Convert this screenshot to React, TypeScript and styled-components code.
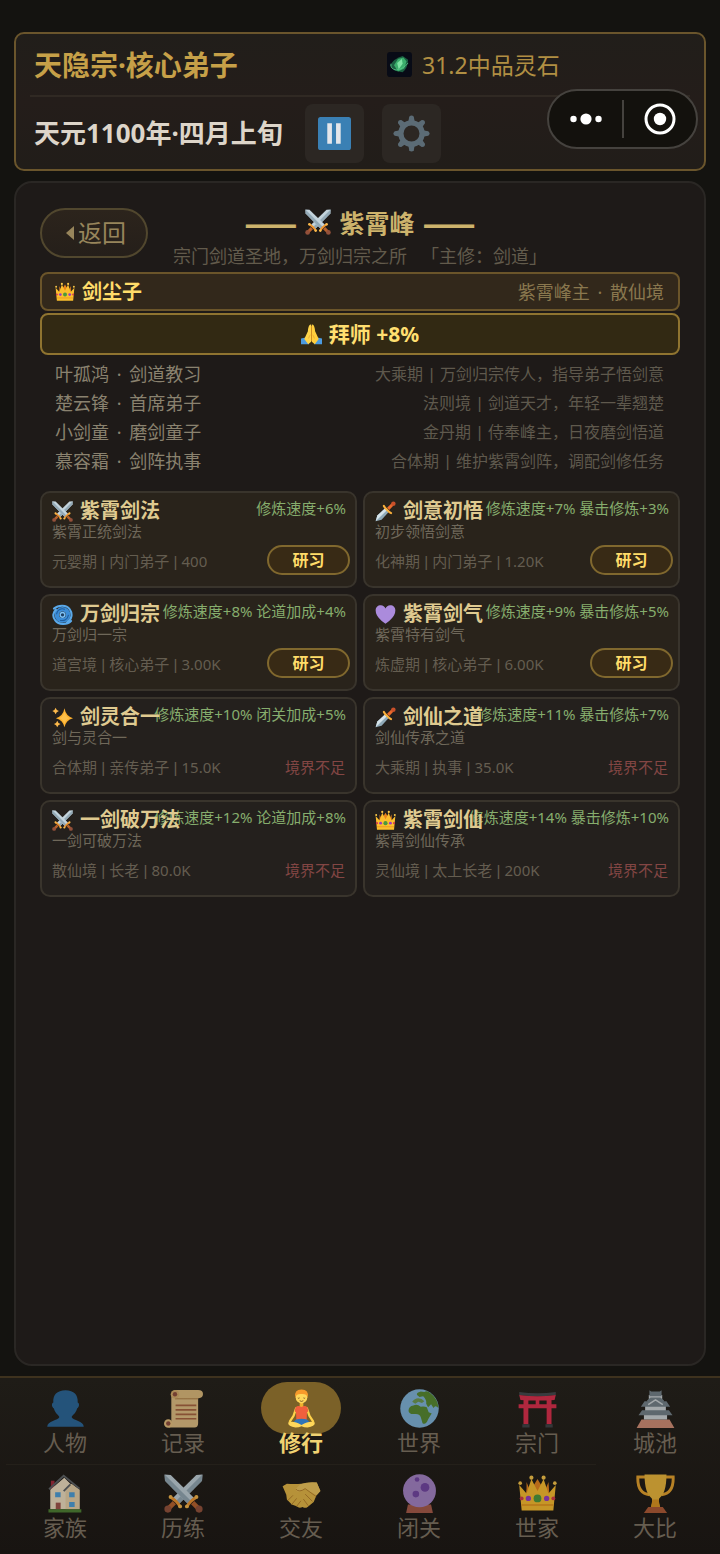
import React from "react";
import styled, { createGlobalStyle, css } from "styled-components";

const GlobalStyle = createGlobalStyle`
  * { box-sizing: border-box; }
  body {
    margin: 0;
    background: #141310;
    color: #8a826f;
    font-family: "Noto Sans", "Noto Sans CJK SC", sans-serif;
  }
  button { font-family: inherit; margin: 0; padding: 0; cursor: pointer; }
`;

/* ---------- icons ---------- */

type IconName =
  | "swords" | "dagger" | "cyclone" | "heart" | "sparkles" | "crown" | "pray"
  | "person" | "scroll" | "lotus" | "globe" | "torii" | "castle" | "house"
  | "handshake" | "crystal" | "trophy" | "pause" | "gear" | "gem";

const Sword = () => (
  <g>
    <path d="M.5 .5 L5.500 .8 L24.500 19.500 L19.500 24.500 L.8 5.500 Z" fill="#c3d3dc" />
    <path d="M.5 .5 L22 22 L19.500 24.500 L.8 5.500 Z" fill="#93a9b6" />
    <path d="M19 26.500 Q20.500 24 22 22.500 Q24 20.500 26.500 19" fill="none" stroke="#f0962f" strokeWidth="2.400" strokeLinecap="round" />
    <path d="M23.500 23.500 L28 28" stroke="#b8622c" strokeWidth="3.800" />
    <circle cx="28.800" cy="28.800" r="2.900" fill="#93503a" />
    <circle cx="18.800" cy="26.600" r="1.600" fill="#f9b94b" />
    <circle cx="26.600" cy="18.800" r="1.600" fill="#f9b94b" />
  </g>
);

const gearTeeth = [0, 45, 90, 135, 180, 225, 270, 315];

const drawings: Record<IconName, React.ReactNode> = {
  swords: (
    <>
      <g transform="matrix(-1 0 0 1 32 0)"><Sword /></g>
      <Sword />
    </>
  ),
  dagger: (
    <>
      <path d="M1 31 L3.500 22 L16 10.500 L21.500 16 L10 28.500 Z" fill="#8fa9b8" />
      <path d="M1 31 L3.500 22 L16 10.500 L19 13.500 Z" fill="#d5e3ea" />
      <path d="M20 12 L27 5" stroke="#e8692c" strokeWidth="4.600" />
      <path d="M13.500 7.500 Q15 10.500 18.500 13.500 Q21.500 17 24.500 18.500" fill="none" stroke="#fbb03b" strokeWidth="3.200" strokeLinecap="round" />
      <circle cx="28" cy="4" r="3.400" fill="#c9502a" />
    </>
  ),
  cyclone: (
    <g fill="none" strokeLinecap="round">
      <circle cx="16" cy="16.500" r="8.500" stroke="#3b8cd6" strokeWidth="7" />
      <path d="M3 7 C10 1 22 1 27 8 C32 15 30 24 23 28" stroke="#5aa9ea" strokeWidth="3.200" />
      <path d="M29 26 C23 32 10 32 5 25 C0 19 2 12 6 9" stroke="#5aa9ea" strokeWidth="3.200" />
      <path d="M7 15 C8 9 14 6 19 8 M25 17 C24 24 18 26 13 25" stroke="#1e5c9c" strokeWidth="1.600" />
      <circle cx="16" cy="16.500" r="3.600" fill="#1d3f63" stroke="#7cc0f5" strokeWidth="2.200" />
    </g>
  ),
  heart: (
    <path d="M16 30 C13 28 1 20 1 10 C1 5 4 2 9 2 C12 2 15 4 16 7 C17 4 20 2 23 2 C28 2 31 5 31 10 C31 20 19 28 16 30 Z" fill="#ab8bdc" />
  ),
  sparkles: (
    <>
      <path d="M19 2 Q21 14 32 17 Q21 20 19 31 Q17 20 6 17 Q17 14 19 2 Z" fill="#fdb02e" />
      <path d="M19 7 Q20.500 15 27 17 Q20.500 19 19 26 Q17.500 19 11 17 Q17.500 15 19 7 Z" fill="#fec04a" />
      <path d="M5.500 1 Q6.500 5 10.500 6 Q6.500 7 5.500 11 Q4.500 7 .5 6 Q4.500 5 5.500 1 Z" fill="#fdb94b" />
      <path d="M8 21 Q9 25 13 26 Q9 27 8 31 Q7 27 3 26 Q7 25 8 21 Z" fill="#fdb94b" />
    </>
  ),
  crown: (
    <>
      <path d="M7 12 L7 6.500 L10 14 L16 4 L22 14 L25 6.500 L26 20 L6 20 Z" fill="#e8841c" />
      <path d="M3 30 L1 9 L7 16 L11 4 L16 14 L21 4 L25 16 L31 9 L29 30 Z" fill="#fcbf2e" />
      <g fill="#fcc94a">
        <circle cx="1.800" cy="7.500" r="1.500" />
        <circle cx="11" cy="3" r="1.700" />
        <circle cx="21" cy="3" r="1.700" />
        <circle cx="30.200" cy="7.500" r="1.500" />
      </g>
      <path d="M3 25.500 H29" stroke="#e8941c" strokeWidth="1.200" />
      <circle cx="16" cy="20" r="3.200" fill="#4b9a3c" />
      <circle cx="8.500" cy="20" r="2.200" fill="#9a3bc4" />
      <circle cx="23.500" cy="20" r="2.200" fill="#9a3bc4" />
      <circle cx="3" cy="20" r="1.600" fill="#d63a48" />
      <circle cx="29" cy="20" r="1.600" fill="#d63a48" />
    </>
  ),
  pray: (
    <>
      <path d="M0 22 L9 20 L12 31 L0 31 Z M32 22 L23 20 L20 31 L32 31 Z" fill="#4c9be0" />
      <path d="M15.500 1 C12.500 0 11 5 10.500 11 L5 23 L11 31 L15.500 27 Z" fill="#ffd54a" />
      <path d="M16.500 1 C19.500 0 21 5 21.500 11 L27 23 L21 31 L16.500 27 Z" fill="#ffcf3d" />
      <path d="M16 3 V26" stroke="#e59a24" strokeWidth="1.200" />
      <path d="M11.500 22 Q13 17 15 16 M20.500 22 Q19 17 17 16" stroke="#e8a32b" strokeWidth="1" fill="none" />
    </>
  ),
  person: (
    <path d="M16 1 C23 1 26.500 5 26 11 C28 12 27 15 25.500 16 C24.500 20 22 21 21 23 C22 26 31 26 31 31 H1 C1 26 10 26 11 23 C10 21 7.500 20 6.500 16 C5 15 4 12 6 11 C5.500 5 9 1 16 1 Z" fill="#27659a" />
  ),
  scroll: (
    <>
      <path d="M6 4 H28 V28 Q28 31.500 25 31.500 H4 V27 H6 Z" fill="#e2c084" />
      <path d="M8.500 .8 H28 Q32 .8 32 4.200 Q32 7.500 28.500 7.500 H8.500 Z" fill="#dfbc7c" />
      <path d="M9 8 H28" stroke="#b88a4f" strokeWidth="1" />
      <circle cx="9" cy="4.300" r="3.500" fill="#d9ae6c" />
      <circle cx="9" cy="4.300" r="1.800" fill="#8f4c3c" />
      <circle cx="3.500" cy="28.300" r="3.500" fill="#e8c27e" />
      <circle cx="3.500" cy="28.300" r="1.800" fill="#8f4c3c" />
      <path d="M9.500 13.500 H26.500 M9.500 17.200 H26.500 M9.500 20.800 H26.500 M9.500 24.400 H26.500" stroke="#a8623f" strokeWidth="1.400" />
    </>
  ),
  lotus: (
    <>
      <path d="M11.500 16 L9.500 22 L6.500 26.500 M20.500 16 L22.500 22 L25.500 26.500" fill="none" stroke="#ffd24a" strokeWidth="1.900" strokeLinecap="round" />
      <path d="M10.500 18.500 Q10.500 14.500 13 14 H19 Q21.500 14.500 21.500 18.500 L20.500 19 L20.200 26 H11.800 L11.500 19 Z" fill="#f0603d" />
      <path d="M11.500 25 Q16 24 20.500 25 L23.500 28 Q16 31 8.500 28 Z" fill="#2f74b8" />
      <path d="M5 27.500 Q9 25.500 16 29.500 Q23 25.500 27 27.500 Q27 31 21 31.500 Q18 31.500 16 30.500 Q14 31.500 11 31.500 Q5 31 5 27.500 Z" fill="#ffd75a" />
      <path d="M14.500 10 H17.500 V14 Q16 15.500 14.500 14 Z" fill="#eeb12f" />
      <ellipse cx="16" cy="6.800" rx="4.800" ry="5" fill="#ffd75a" />
      <path d="M10.800 7 Q9.800 .5 16 .5 Q22.200 .5 21.200 7 Q20 3.800 16 4.200 Q12 3.800 10.800 7 Z" fill="#f79a2b" />
      <path d="M13 7.300 Q13.700 8 14.400 7.300 M17.600 7.300 Q18.300 8 19 7.300 M14.500 9.600 Q16 10.800 17.500 9.600" stroke="#5c3b1c" strokeWidth=".6" fill="none" />
    </>
  ),
  globe: (
    <>
      <circle cx="16" cy="16" r="15.800" fill="#7fb5dd" />
      <path d="M7 18 Q7 14 11 13.500 Q14 12 17 14.500 Q20 14 22 15 L23.500 19 L26 20 Q24 23 23 25 Q21 30 18.500 28 L17 23 Q16 20 12 20.500 Q7.500 21 7 18 Z" fill="#54892f" />
      <path d="M14 5 Q13 3 17 2 L20 2.500 Q22 .8 25 3.500 Q31 8 31.500 15.500 Q29 13 27.500 15.500 L25.500 12.500 L23 15 L21.500 12 Q22 9 19 6 L16 6.500 Z" fill="#54892f" />
      <path d="M10 10.500 Q12 7.500 15 7.500 Q18 7.500 20 10 L18 11.500 L15 10.500 L12.500 12 Z" fill="#6c9a52" />
    </>
  ),
  torii: (
    <>
      <path d="M1 2.500 Q16 4.500 31 2.500 V5 Q16 7 1 5 Z" fill="#41464b" />
      <path d="M1 5 Q16 7 31 5 L30 9 Q16 10 2 9 Z M.5 12.500 H31.500 V15.800 H.5 Z M4.500 9 H8.500 V29 H4.500 Z M23.500 9 H27.500 V29 H23.500 Z M14.500 9 H17.500 V13 H14.500 Z" fill="#de2c4b" />
      <path d="M3.500 29 H9.500 V31.500 H3.500 Z M22.500 29 H28.500 V31.500 H22.500 Z" fill="#3c4146" />
    </>
  ),
  castle: (
    <>
      <path d="M4.500 25 H27.500 L31.500 32 H.5 Z" fill="#d38e76" />
      <path d="M6.500 20 H25.500 V25 H6.500 Z M7.500 14 H24.500 V18 H7.500 Z M10.500 5 H21.500 V11 H10.500 Z" fill="#cfd6da" />
      <path d="M11 1 L12.500 2 H19.500 L21 1 V6 H11 Z M9 9.500 L12 7 H20 L23 9.500 L22 11 H10 Z M4 14.500 L7 10 H25 L28 14.500 H4 Z M2 21.500 L5 17.500 H27 L30 21.500 Z" fill="#73818a" />
      <path d="M10 12.800 L16 9 L22 12.800" fill="none" stroke="#cfd6da" strokeWidth="1.200" />
    </>
  ),
  house: (
    <>
      <path d="M4 5.500 H7 V13 H4 Z" fill="#a3293b" />
      <path d="M3.500 13 L15 3 L20 8 L27.500 13 V29 H3.500 Z" fill="#f2e2c4" />
      <path d="M16 12 L21 8 L27.500 13 V29 H16 Z" fill="#ead3aa" />
      <path d="M2.500 12.500 L14.500 1.500 L27.500 12 M14.500 14 L20 8.500" fill="none" stroke="#5d6266" strokeWidth="1.500" />
      <path d="M7.500 15 H12 V19 H7.500 Z M19 15 H23.500 V19 H19 Z M19 23 H23.500 V27 H19 Z" fill="#4ba0dd" />
      <path d="M8 23.500 H12 V29 H8 Z" fill="#a0534a" />
      <path d="M2 29 H29 V31.500 H2 Z" fill="#4c8132" />
    </>
  ),
  handshake: (
    <>
      <path d="M.5 10 L4 8 Q10 8.500 16 8 Q22 7 28.500 7 L31.500 14 L28.500 17 L26 23 L21 27 Q19 28.500 17 27 Q14 28.500 12 26.500 L8 25 L4 21 L3.500 17 Z" fill="#e8b945" />
      <path d="M15 8.500 Q22 6 28.500 7 L31.500 14 L28.500 17.500 L19 12 L14 14.500 Q11 14 11.500 12 Z" fill="#f2c85c" />
      <path d="M5 21.500 L9 17.500 M8 25 L12 20 M12 26.500 L15.500 22 M11.500 12.500 Q14 15.500 19 12 L28 18.500 M19 16.500 L25 22.500 M17.500 20.500 L21.500 26" stroke="#b9832a" strokeWidth=".8" fill="none" />
    </>
  ),
  crystal: (
    <>
      <path d="M6.500 25 H25.500 L27 32 H5 Z" fill="#a85a48" />
      <circle cx="16" cy="13.800" r="13.500" fill="#a583c9" />
      <circle cx="20.500" cy="11" r="3.600" fill="#7244a6" />
      <circle cx="13" cy="16.500" r="2.700" fill="#7244a6" />
      <circle cx="14" cy="4.500" r="1.900" fill="#7244a6" />
    </>
  ),
  trophy: (
    <>
      <path d="M8 2.500 H1.500 Q1 16 11 17 M24 2.500 H30.500 Q31 16 21 17" fill="none" stroke="#e8a32b" strokeWidth="2.400" />
      <path d="M7 .5 H25 Q25 16 19 20 L18.500 23 L20 28 H12 L13.500 23 L13 20 Q7 16 7 .5 Z" fill="#efb93a" />
      <path d="M13.500 21 H18.500 L20 28 H12 Z" fill="#e0961f" />
      <path d="M10 27 H22 L25.500 32 H6.500 Z" fill="#b05a35" />
    </>
  ),
  pause: (
    <>
      <rect x="0" y="0" width="32" height="32" rx="2.500" fill="#3a80b4" />
      <path d="M9 6 H13.500 V26 H9 Z M17.500 6 H22 V26 H17.500 Z" fill="#e4e6ea" />
    </>
  ),
  gear: (
    <g>
      {gearTeeth.map((a) => (
        <path key={a} d="M13 7.500 L14 1.500 Q16 -.8 18 1.500 L19 7.500 Z" fill="#5b6b75" transform={`rotate(${a} 16 16)`} />
      ))}
      <circle cx="16" cy="16" r="9.200" fill="none" stroke="#5b6b75" strokeWidth="4.600" />
    </g>
  ),
  gem: (
    <>
      <rect width="32" height="32" rx="4" fill="#080b16" />
      <path d="M4 17 Q9 8 20 5 L27 10 Q27 20 20 26 L10 24 Z" fill="#1c5f42" />
      <path d="M9 17 L14 9 L21 7 L25 12 L22 21 L14 25 Z" fill="#3bae6c" />
      <path d="M13 14 L19 9 L20 15 L15 22 Z" fill="#7fe3a4" />
      <path d="M5 15 Q4 22 12 23 Q21 22 27 14" stroke="#59c98a" strokeWidth="1" fill="none" />
    </>
  ),
};

const IconSvg = styled.svg<{ $size: number }>`
  display: block;
  flex: none;
  width: ${(p) => p.$size}px;
  height: ${(p) => p.$size}px;
`;

const Icon = ({ name, size }: { name: IconName; size: number }) => (
  <IconSvg $size={size} viewBox="0 0 32 32" aria-hidden="true">
    {drawings[name]}
  </IconSvg>
);

/* ---------- page and status header ---------- */

const Page = styled.div`
  position: relative;
  display: flex;
  flex-direction: column;
  min-height: 100vh;
  padding-top: 32px;
`;

const StatusCard = styled.header`
  margin: 0 14px;
  padding: 0 14px;
  border: 2px solid #6a552c;
  border-radius: 10px;
  background: linear-gradient(#211e1a, #241d1a 50%, #211d19);
`;

const StatusRow = styled.div`
  display: grid;
  grid-template-columns: 1fr 1fr;
  align-items: center;
  height: 61px;
  padding: 0 4px;
`;

const TimeRow = styled.div`
  display: flex;
  align-items: center;
  gap: 18px;
  height: 74px;
  padding: 0 4px;
  border-top: 2px solid #302923;
`;

const RankName = styled.h1`
  margin: 0;
  color: #c6a048;
  font-size: 28px;
  line-height: 36px;
`;

const Currency = styled.div`
  display: flex;
  align-items: center;
  gap: 10px;
  padding-left: 27px;
  color: #b18f43;
  font-size: 23px;
  line-height: 32px;
  white-space: nowrap;
`;

const GameDate = styled.div`
  min-width: 253px;
  color: #ddd5c9;
  font-size: 26px;
  font-weight: 700;
  line-height: 36px;
  white-space: nowrap;
`;

const SquareButton = styled.button`
  display: flex;
  align-items: center;
  justify-content: center;
  width: 59px;
  height: 59px;
  border: 0;
  border-radius: 8px;
  background: #2c2723;
`;

const Capsule = styled.div`
  position: absolute;
  top: 89px;
  right: 22px;
  display: grid;
  grid-template-columns: 73px 1fr;
  align-items: center;
  width: 151px;
  height: 60px;
  border: 2px solid #45423e;
  border-radius: 30px;
  background: #13110d;
`;

const CapsuleButton = styled.button`
  display: flex;
  align-items: center;
  justify-content: center;
  height: 38px;
  border: 0;
  background: none;
  & + & { border-left: 2px solid #45423e; }
`;

/* ---------- main panel ---------- */

const Panel = styled.main`
  flex: 1;
  margin: 10px 14px;
  padding: 25px 24px;
  border: 2px solid #2a2724;
  border-radius: 18px;
  background: #1e1a18;
`;

const PanelHeader = styled.div`
  display: grid;
  grid-template-columns: 108px 1fr 108px;
  align-items: start;
`;

const BackButton = styled.button`
  display: flex;
  align-items: center;
  justify-content: center;
  gap: 4px;
  height: 50px;
  padding-left: 4px;
  border: 2px solid #51472e;
  border-radius: 25px;
  background: linear-gradient(#2c241c, #251f1a);
  color: #97855b;
  font-size: 24px;
  line-height: 30px;
`;

const PeakTitle = styled.h2`
  display: flex;
  align-items: center;
  justify-content: center;
  gap: 8px;
  margin: 0;
  color: #cdb36c;
  font-family: "Noto Sans CJK SC", sans-serif;
  font-size: 25px;
  line-height: 28px;
  white-space: nowrap;
`;

const Dash = styled.span`
  font-size: 31px;
  font-weight: 900;
  line-height: 24px;
`;

const PeakNote = styled.p`
  display: flex;
  justify-content: center;
  gap: 14px;
  margin: 6px 0 0;
  color: #625b4c;
  font-size: 18px;
  line-height: 28px;
  white-space: nowrap;
`;

const MasterRow = styled.div`
  display: flex;
  align-items: center;
  justify-content: space-between;
  height: 39px;
  margin-top: 2px;
  padding: 0 14px 0 13px;
  border: 2px solid #6b552a;
  border-radius: 8px;
  background: #32281b;
`;

const MasterName = styled.div`
  display: flex;
  align-items: center;
  gap: 7px;
  color: #ffdc6a;
  font-size: 20px;
  font-weight: 700;
  line-height: 36px;
`;

const MasterRank = styled.div`
  color: #89774e;
  font-size: 18px;
  line-height: 36px;
`;

const ApprenticeButton = styled.button`
  display: flex;
  align-items: center;
  justify-content: center;
  gap: 7px;
  width: 100%;
  height: 42px;
  margin-top: 2px;
  border: 2px solid #8f7430;
  border-radius: 8px;
  background: #322913;
  color: #ffdf70;
  font-size: 21px;
  font-weight: 700;
  line-height: 36px;
`;

const DiscipleList = styled.ul`
  margin: 5px 0 0;
  padding: 0 16px 0 15px;
  list-style: none;
`;

const Disciple = styled.li`
  display: flex;
  justify-content: space-between;
  font-size: 18px;
  line-height: 29px;
`;

const DiscipleInfo = styled.span`
  color: #5f594d;
  font-size: 16px;
`;

const Dot = styled.span`
  margin: 0 3px;
`;

const Bar = styled.span`
  font-family: "Liberation Sans", sans-serif;
  white-space: pre;
  ${DiscipleInfo} & { margin: 0 2px; }
`;

const SkillGrid = styled.section`
  display: grid;
  grid-template-columns: 1fr 1fr;
  gap: 6px;
  margin-top: 15px;
`;

const SkillCard = styled.article<{ $locked: boolean }>`
  position: relative;
  height: 97px;
  padding: 5px 5px 0 10px;
  border: 2px solid #39342c;
  border-radius: 10px;
  background: ${(p) => (p.$locked ? "#24201d" : "#29231b")};
`;

const SkillName = styled.h3`
  position: relative;
  z-index: 1;
  display: flex;
  align-items: center;
  gap: 7px;
  margin: 0;
  color: #dfca90;
  font-size: 20px;
  line-height: 26px;
  white-space: nowrap;
`;

const SkillEffects = styled.div`
  position: absolute;
  top: 4px;
  right: 9px;
  color: #86ad6d;
  font-size: 15px;
  line-height: 22px;
  white-space: nowrap;
`;

const SkillText = styled.p`
  margin: 0;
  color: #6f685a;
  font-size: 15px;
  line-height: 14px;
`;

const SkillFooter = styled.div`
  display: flex;
  align-items: center;
  justify-content: space-between;
  height: 30px;
  margin-top: 7px;
  color: #645d50;
  font-size: 15px;
  white-space: nowrap;
`;

const StudyButton = styled.button`
  width: 83px;
  height: 30px;
  border: 2px solid #80682e;
  border-radius: 15px;
  background: #382a15;
  color: #ffdc69;
  font-size: 16px;
  font-weight: 700;
  line-height: 24px;
`;

const LockedLabel = styled.span`
  margin-right: 5px;
  color: #834644;
`;

/* ---------- bottom navigation ---------- */

const Nav = styled.nav`
  display: grid;
  grid-template-columns: repeat(6, 1fr);
  padding: 2px 6px 4px;
  border-top: 2px solid #3e321e;
  background: linear-gradient(#1f1c17, #181411);
`;

const activeLabel = css`
  color: #f0d272;
  font-weight: 700;
`;

const NavItem = styled.button<{ $active: boolean; $ruled: boolean }>`
  display: flex;
  flex-direction: column;
  align-items: center;
  height: 85px;
  padding-top: 2px;
  border: 0;
  border-bottom: 1px solid ${(p) => (p.$ruled ? "#24201a" : "transparent")};
  background: none;
  color: #665d50;
  font-size: 22px;
  line-height: 24px;
  ${(p) => p.$active && activeLabel}
`;

const NavBadge = styled.span<{ $active: boolean }>`
  display: flex;
  align-items: center;
  justify-content: center;
  width: 80px;
  height: 52px;
  border-radius: 26px;
  background: ${(p) => (p.$active ? "#7b6128" : "transparent")};
  svg { opacity: ${(p) => (p.$active ? 1 : 0.76)}; }
`;

const NavLabel = styled.span`
  position: relative;
  margin-top: -4px;
`;

/* ---------- data ---------- */

const disciples = [
  ["叶孤鸿", "剑道教习", "大乘期", "万剑归宗传人，指导弟子悟剑意"],
  ["楚云锋", "首席弟子", "法则境", "剑道天才，年轻一辈翘楚"],
  ["小剑童", "磨剑童子", "金丹期", "侍奉峰主，日夜磨剑悟道"],
  ["慕容霜", "剑阵执事", "合体期", "维护紫霄剑阵，调配剑修任务"],
];

interface Skill {
  icon: IconName;
  name: string;
  effects: string;
  text: string;
  needs: string[];
  locked?: boolean;
}

const skills: Skill[] = [
  { icon: "swords", name: "紫霄剑法", effects: "修炼速度+6%", text: "紫霄正统剑法", needs: ["元婴期", "内门弟子", "400"] },
  { icon: "dagger", name: "剑意初悟", effects: "修炼速度+7% 暴击修炼+3%", text: "初步领悟剑意", needs: ["化神期", "内门弟子", "1.20K"] },
  { icon: "cyclone", name: "万剑归宗", effects: "修炼速度+8% 论道加成+4%", text: "万剑归一宗", needs: ["道宫境", "核心弟子", "3.00K"] },
  { icon: "heart", name: "紫霄剑气", effects: "修炼速度+9% 暴击修炼+5%", text: "紫霄特有剑气", needs: ["炼虚期", "核心弟子", "6.00K"] },
  { icon: "sparkles", name: "剑灵合一", effects: "修炼速度+10% 闭关加成+5%", text: "剑与灵合一", needs: ["合体期", "亲传弟子", "15.0K"], locked: true },
  { icon: "dagger", name: "剑仙之道", effects: "修炼速度+11% 暴击修炼+7%", text: "剑仙传承之道", needs: ["大乘期", "执事", "35.0K"], locked: true },
  { icon: "swords", name: "一剑破万法", effects: "修炼速度+12% 论道加成+8%", text: "一剑可破万法", needs: ["散仙境", "长老", "80.0K"], locked: true },
  { icon: "crown", name: "紫霄剑仙", effects: "修炼速度+14% 暴击修炼+10%", text: "紫霄剑仙传承", needs: ["灵仙境", "太上长老", "200K"], locked: true },
];

const navItems: [IconName, string][] = [
  ["person", "人物"], ["scroll", "记录"], ["lotus", "修行"],
  ["globe", "世界"], ["torii", "宗门"], ["castle", "城池"],
  ["house", "家族"], ["swords", "历练"], ["handshake", "交友"],
  ["crystal", "闭关"], ["crown", "世家"], ["trophy", "大比"],
];

const Joined = ({ parts }: { parts: string[] }) => (
  <span>
    {parts.map((part, i) => (
      <React.Fragment key={part}>
        {i > 0 && <Bar>{" | "}</Bar>}
        {part}
      </React.Fragment>
    ))}
  </span>
);

export default function App() {
  return (
    <Page>
      <GlobalStyle />
      <StatusCard>
        <StatusRow>
          <RankName>天隐宗·核心弟子</RankName>
          <Currency>
            <Icon name="gem" size={25} />
            31.2中品灵石
          </Currency>
        </StatusRow>
        <TimeRow>
          <GameDate>天元1100年·四月上旬</GameDate>
          <SquareButton aria-label="暂停"><Icon name="pause" size={33} /></SquareButton>
          <SquareButton aria-label="设置"><Icon name="gear" size={37} /></SquareButton>
        </TimeRow>
      </StatusCard>

      <Capsule>
        <CapsuleButton aria-label="更多">
          <svg width="32" height="12" viewBox="0 0 32 12" fill="#fff">
            <circle cx="3.500" cy="6" r="3.200" />
            <circle cx="16" cy="6" r="5.600" />
            <circle cx="28.500" cy="6" r="3.200" />
          </svg>
        </CapsuleButton>
        <CapsuleButton aria-label="关闭">
          <svg width="32" height="32" viewBox="0 0 32 32">
            <circle cx="16" cy="16" r="14" fill="none" stroke="#fff" strokeWidth="3" />
            <circle cx="16" cy="16" r="6.200" fill="#fff" />
          </svg>
        </CapsuleButton>
      </Capsule>

      <Panel>
        <PanelHeader>
          <BackButton>
            <svg width="8" height="14" viewBox="0 0 8 14" aria-hidden="true">
              <path d="M8 0 V14 L0 7 Z" fill="currentColor" />
            </svg>
            返回
          </BackButton>
          <div>
            <PeakTitle>
              <Dash>——</Dash>
              <Icon name="swords" size={26} />
              <span>紫霄峰</span>
              <Dash>——</Dash>
            </PeakTitle>
            <PeakNote>
              <span>宗门剑道圣地，万剑归宗之所</span>
              <span>「主修：剑道」</span>
            </PeakNote>
          </div>
        </PanelHeader>

        <MasterRow>
          <MasterName><Icon name="crown" size={20} />剑尘子</MasterName>
          <MasterRank>紫霄峰主<Dot> · </Dot>散仙境</MasterRank>
        </MasterRow>
        <ApprenticeButton><Icon name="pray" size={21} />拜师 +8%</ApprenticeButton>

        <DiscipleList>
          {disciples.map(([name, role, realm, note]) => (
            <Disciple key={name}>
              <span>{name}<Dot> · </Dot>{role}</span>
              <DiscipleInfo><Joined parts={[realm, note]} /></DiscipleInfo>
            </Disciple>
          ))}
        </DiscipleList>

        <SkillGrid>
          {skills.map((s) => (
            <SkillCard key={s.name} $locked={!!s.locked}>
              <SkillName><Icon name={s.icon} size={21} />{s.name}</SkillName>
              <SkillEffects>{s.effects}</SkillEffects>
              <SkillText>{s.text}</SkillText>
              <SkillFooter>
                <Joined parts={s.needs} />
                {s.locked ? <LockedLabel>境界不足</LockedLabel> : <StudyButton>研习</StudyButton>}
              </SkillFooter>
            </SkillCard>
          ))}
        </SkillGrid>
      </Panel>

      <Nav>
        {navItems.map(([icon, label], i) => (
          <NavItem key={label} $active={label === "修行"} $ruled={i < 5}>
            <NavBadge $active={label === "修行"}><Icon name={icon} size={39} /></NavBadge>
            <NavLabel>{label}</NavLabel>
          </NavItem>
        ))}
      </Nav>
    </Page>
  );
}
